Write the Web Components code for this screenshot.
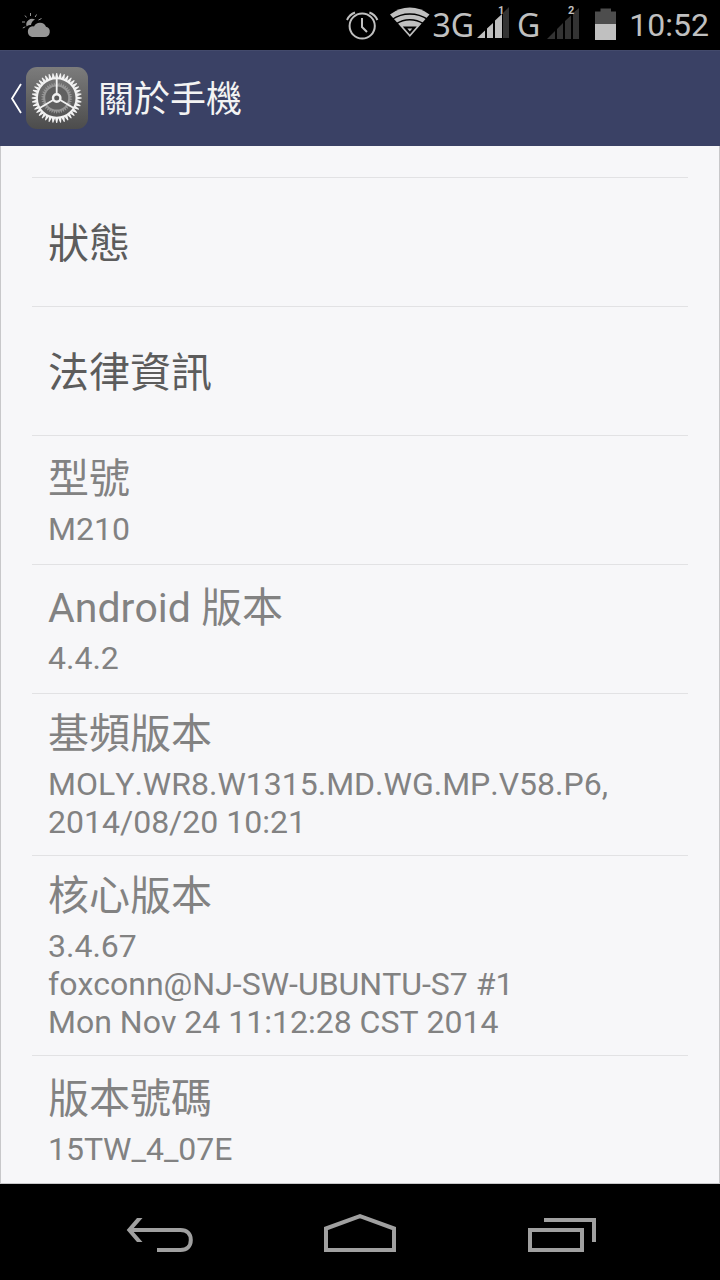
<!DOCTYPE html>
<html lang="zh-Hant">
<head>
<meta charset="utf-8">
<meta name="viewport" content="width=device-width, initial-scale=1">
<title>關於手機</title>
<style>
    body {
        margin: 0;
        background-color: #000;
        font-family: Roboto, "Noto Sans CJK TC", sans-serif;
        font-kerning: none;
    }
</style>
</head>
<body>
<phone-screen>
    <status-bar slot="status" time="10:52"></status-bar>
    <action-bar slot="header">關於手機</action-bar>
    <info-row action>狀態</info-row>
    <info-row action>法律資訊</info-row>
    <info-row>型號<span slot="summary">M210</span></info-row>
    <info-row>Android 版本<span slot="summary">4.4.2</span></info-row>
    <info-row>基頻版本<span slot="summary">MOLY.WR8.W1315.MD.WG.MP.V58.P6,<br>2014/08/20 10:21</span></info-row>
    <info-row>核心版本<span slot="summary">3.4.67<br>foxconn@NJ-SW-UBUNTU-S7 #1<br>Mon Nov 24 11:12:28 CST 2014</span></info-row>
    <info-row>版本號碼<span slot="summary">15TW_4_07E</span></info-row>
    <nav-bar slot="nav"></nav-bar>
</phone-screen>

<script>
class PhoneScreen extends HTMLElement {
  constructor() {
    super();
    this.shadowDOM = this.attachShadow({ mode: 'open' });
  }

  connectedCallback() {
    this.render();
  }

  render() {
    this.shadowDOM.innerHTML = `
    <style>
    * {
        box-sizing: border-box;
    }
    :host {
        display: flex;
        flex-direction: column;
        height: 100vh;
    }
    main {
        flex: 1;
        min-height: 0;
        overflow-y: auto;
        scrollbar-width: none;
        padding: 31px 31px 0;
        background-color: #f7f7f9;
        border: 1px solid #c8c8ca;
        border-top: none;
    }
    </style>

    <slot name="status"></slot>
    <slot name="header"></slot>
    <main><slot></slot></main>
    <slot name="nav"></slot>
    `;
  }
}

class StatusBar extends HTMLElement {
  constructor() {
    super();
    this.shadowDOM = this.attachShadow({ mode: 'open' });
  }

  connectedCallback() {
    this.render();
  }

  render() {
    this.shadowDOM.innerHTML = `
    <style>
    :host {
        display: flex;
        flex: none;
        align-items: center;
        justify-content: space-between;
        height: 50px;
        padding: 0 11px 0 20px;
        background-color: #000;
        color: #c0c0c0;
    }
    svg {
        display: block;
        fill: currentColor;
    }
    .icons {
        display: flex;
        align-items: center;
        gap: 2px;
    }
    .network {
        font: 32px/48px "Noto Sans", sans-serif;
    }
    time {
        font-size: 32px;
        line-height: 50px;
        padding-left: 10px;
    }
    </style>

    <svg width="32" height="50" viewBox="20 0 32 50" role="img" aria-label="Weather">
        <g fill="#969696">
            <path d="M26.600 26.500A5.800 5.800 0 0 1 35 19.600Q31.500 21.500 31 25Q28 24.500 26.600 26.500Z"/>
            <path d="M32 37A5.500 5.500 0 0 1 31.500 26.500Q33 26 34 26.400A6.600 6.600 0 0 1 46 26.800A5.200 5.200 0 0 1 44.500 37Z"/>
        </g>
        <path d="M30.500 13V16M25 15.500L26.500 17.500M36.500 14.500L35.200 17M41.500 18.500L38.500 20M22 22H25M22.800 28L25.300 26.800" stroke="#969696" stroke-width="1" fill="none"/>
    </svg>
    <div class="icons">
        <svg width="43" height="50" viewBox="344 0 43 50" role="img" aria-label="Alarm">
            <g fill="none" stroke="currentColor" stroke-width="2">
                <circle cx="361.200" cy="26" r="12.600"/>
                <path d="M361 18V27L366 32M346 20Q348.500 14.500 354 12.500M376.400 20Q374 14.500 368.400 12.500"/>
            </g>
        </svg>
        <svg width="40" height="50" viewBox="389 0 40 50" role="img" aria-label="Wi-Fi">
            <path d="M389 14.500Q398 7.500 408.800 7.500T428.500 14.500L408.800 37Z"/>
            <g fill="none" stroke="#000" stroke-width="1.500">
                <path d="M391 19.500Q399 14 408.800 14T427 19.500M395 24Q401.500 19.700 408.800 19.700T423 24"/>
                <path d="M404 27.500H413.600L408.800 33Z" stroke-width="2"/>
            </g>
        </svg>
        <span class="network">3G</span>
        <svg width="39" height="50" viewBox="476 0 39 50" role="img" aria-label="SIM 1 signal">
            <path d="M477 38L485 30.500V38ZM487 38V28.500L493 23V38Z"/>
            <path d="M495 38V20.500L502 14V38Z"/>
            <path d="M503 38V13L509 7V38Z" fill="#333"/>
            <text x="498" y="14" font-size="11" font-weight="bold">1</text>
        </svg>
        <span class="network">G</span>
        <svg width="51" height="50" viewBox="542 0 51 50" role="img" aria-label="SIM 2 signal">
            <path d="M547 39L555 31V39ZM557 39V29L563 23V39ZM565 39V21L571 15.500V39ZM573 39V13L579 8V39Z" fill="#333"/>
            <text x="568" y="14" font-size="11" font-weight="bold">2</text>
        </svg>
        <svg width="22" height="50" viewBox="595 0 22 50" role="img" aria-label="Battery">
            <path d="M595 11.500H600.500V8.500H611V11.500H616V40H595Z" fill="#4d4d4d"/>
            <path d="M595 24H616V40H595Z"/>
        </svg>
        <time>${this.getAttribute('time')}</time>
    </div>
    `;
  }
}

class ActionBar extends HTMLElement {
  constructor() {
    super();
    this.shadowDOM = this.attachShadow({ mode: 'open' });
  }

  connectedCallback() {
    this.render();
  }

  // closed ring of pointed teeth around the gear centre
  teeth(count, inner, outer) {
    const points = [];
    for (let i = 0; i < count; i++) {
      [[0, inner], [0.38, outer], [0.62, outer]].forEach(([step, radius]) => {
        const angle = (i + step - 0.5) / count * Math.PI * 2;
        points.push(`${(Math.sin(angle) * radius).toFixed(2)},${(-Math.cos(angle) * radius).toFixed(2)}`);
      });
    }
    return points.join(' ');
  }

  render() {
    this.shadowDOM.innerHTML = `
    <style>
    * {
        box-sizing: border-box;
    }
    :host {
        display: flex;
        flex: none;
        align-items: center;
        gap: 10px;
        height: 96px;
        padding: 0 10px;
        box-sizing: border-box;
        background-color: #3a4165;
        box-shadow: inset 0 1px #434a6c;
    }
    a, svg {
        display: block;
    }
    h1 {
        margin: 0;
        padding-top: 4px;
        font-size: 36px;
        line-height: 48px;
        font-weight: normal;
        color: #f3f3f3;
    }
    </style>

    <a href="#" aria-label="Back">
        <svg width="78" height="62" viewBox="0 0 78 62">
            <defs>
                <linearGradient id="tile" x1="0" y1="0" x2="0" y2="1">
                    <stop offset="0" stop-color="#7c7c7c"/>
                    <stop offset="1" stop-color="#4c4c4c"/>
                </linearGradient>
            </defs>
            <path d="M11 17L2 31.500L11 46" fill="none" stroke="#fff" stroke-width="1.800"/>
            <rect x="16" width="62" height="62" rx="11" fill="url(#tile)"/>
            <g transform="translate(46.700 31)">
                <polygon points="${this.teeth(38, 13, 15.5)}" fill="#969696"/>
                <circle r="11.500" fill="#606060"/>
                <path fill="#f2f2f2" fill-rule="evenodd" d="M${this.teeth(40, 20.3, 25)}ZM0-18.800A18.800 18.800 0 1 0 0 18.800A18.800 18.800 0 1 0 0-18.800Z"/>
                <path d="M0-4V-20M3.500 2L17 10M-3.500 2L-17 10" stroke="#f2f2f2" stroke-width="1.800"/>
                <circle r="3.700" fill="#5c5c5c" stroke="#f2f2f2" stroke-width="2.400"/>
            </g>
        </svg>
    </a>
    <h1><slot></slot></h1>
    `;
  }
}

class InfoRow extends HTMLElement {
  constructor() {
    super();
    this.shadowDOM = this.attachShadow({ mode: 'open' });
  }

  connectedCallback() {
    this.render();
  }

  render() {
    const title = this.hasAttribute('action')
      ? '<button type="button" class="title"><slot></slot></button>'
      : '<div class="title"><slot></slot></div><div class="summary"><slot name="summary"></slot></div>';

    this.shadowDOM.innerHTML = `
    <style>
    * {
        box-sizing: border-box;
    }
    :host {
        display: flex;
        flex-direction: column;
        justify-content: center;
        box-sizing: border-box;
        min-height: 129px;
        border-top: 1px solid #e2e2e4;
        color: #828282;
    }
    .title {
        padding: 16px 16px 0;
        font-size: 41px;
        line-height: 48px;
    }
    .summary {
        padding: 7px 16px 14px;
        font-size: 32px;
        line-height: 38px;
    }
    button {
        border: none;
        background: none;
        font-family: inherit;
        text-align: left;
        color: #5c5c5c;
    }
    button.title {
        padding: 42px 16px 38px;
    }
    </style>

    ${title}
    `;
  }
}

class NavBar extends HTMLElement {
  constructor() {
    super();
    this.shadowDOM = this.attachShadow({ mode: 'open' });
  }

  connectedCallback() {
    this.render();
  }

  render() {
    this.shadowDOM.innerHTML = `
    <style>
    :host {
        display: grid;
        flex: none;
        grid-template-columns: repeat(3, 1fr);
        height: 96px;
        padding: 0 60px;
        background-color: #000;
    }
    button {
        display: flex;
        align-items: center;
        justify-content: center;
        padding: 0;
        border: none;
        background: none;
    }
    svg {
        fill: none;
        stroke: #a0a0a0;
        stroke-width: 4;
    }
    </style>

    <button type="button" aria-label="Back">
        <svg width="80" height="96" viewBox="0 0 80 96">
            <path d="M9 46H60.500C67 46 70.800 50 70.800 56S67 66 60.500 66H37"/>
            <path d="M17 34H22.500L12 46L22.500 58H17L6.700 46Z" fill="#a0a0a0" stroke="none"/>
        </svg>
    </button>
    <button type="button" aria-label="Home">
        <svg width="80" height="96" viewBox="0 0 80 96">
            <path d="M6 66V44.500L40 32.200L74 44.500V66Z"/>
        </svg>
    </button>
    <button type="button" aria-label="Recent apps">
        <svg width="80" height="96" viewBox="0 0 80 96">
            <path d="M10 46H62V66H10ZM24 36H74V58"/>
        </svg>
    </button>
    `;
  }
}

customElements.define('phone-screen', PhoneScreen);
customElements.define('status-bar', StatusBar);
customElements.define('action-bar', ActionBar);
customElements.define('info-row', InfoRow);
customElements.define('nav-bar', NavBar);
</script>
</body>
</html>
